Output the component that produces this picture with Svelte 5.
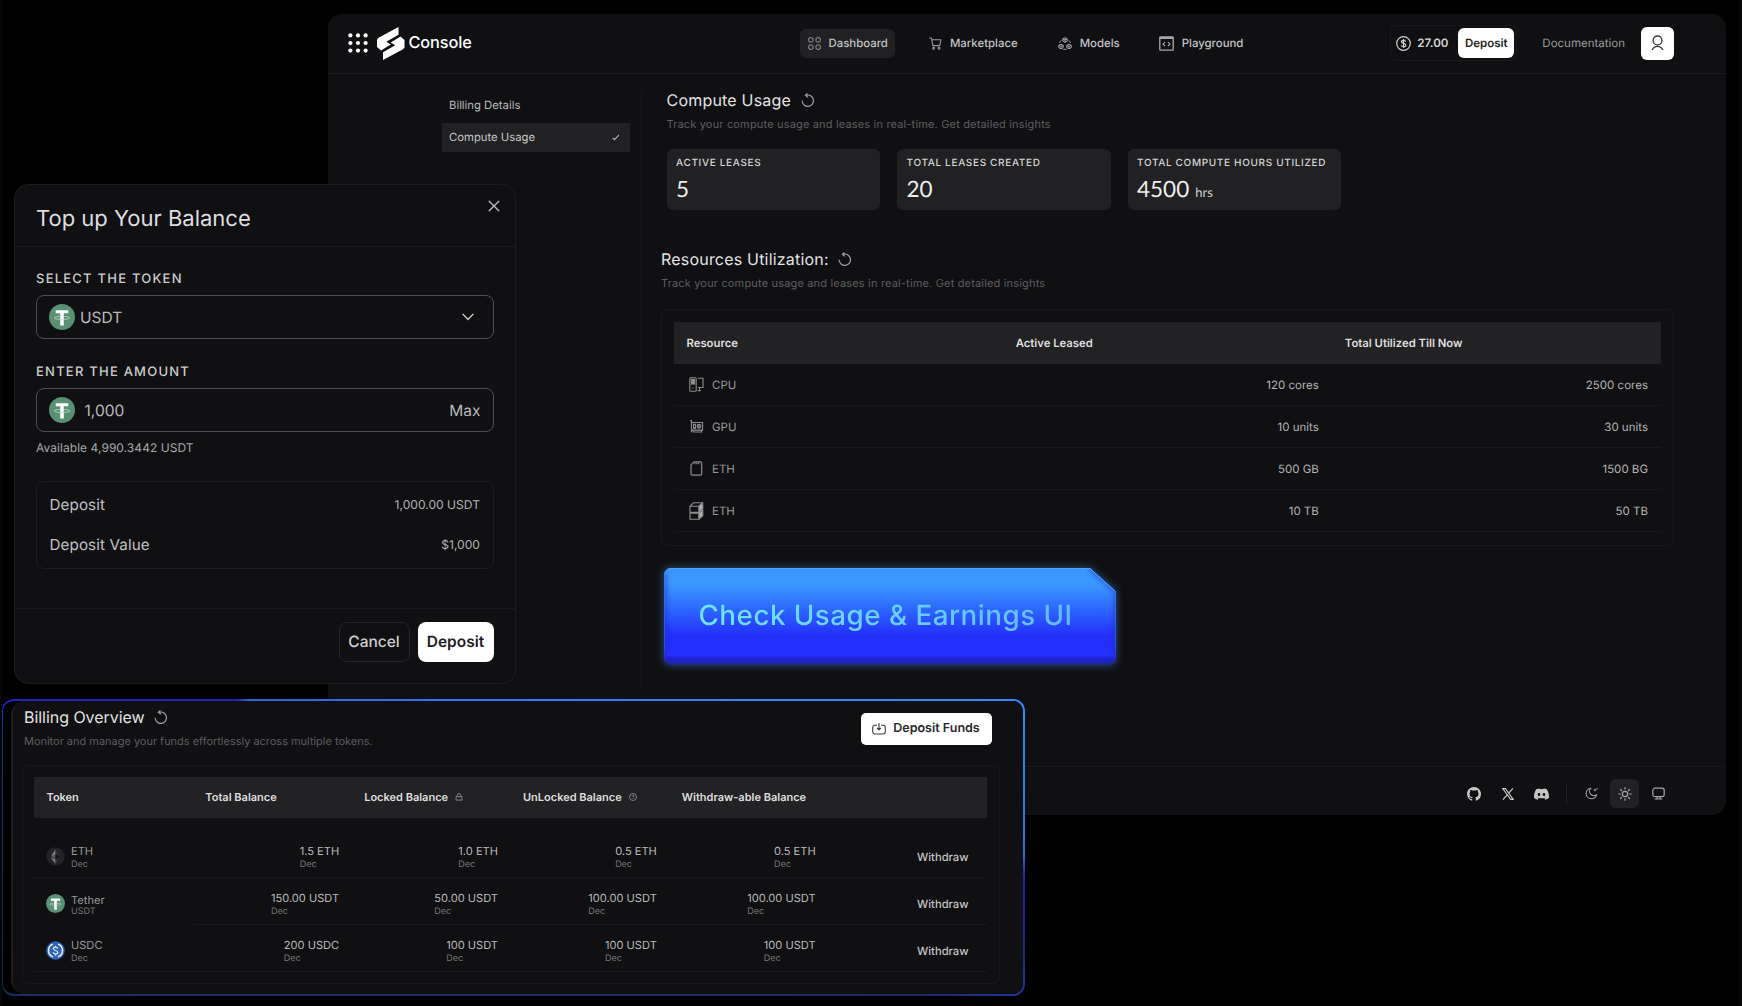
<script>
  const nav = [
    { label: 'Dashboard', icon: 'grid', active: true },
    { label: 'Marketplace', icon: 'cart' },
    { label: 'Models', icon: 'cubes' },
    { label: 'Playground', icon: 'code' }
  ];
  const stats = [
    { label: 'ACTIVE LEASES', value: '5' },
    { label: 'TOTAL LEASES CREATED', value: '20' },
    { label: 'TOTAL COMPUTE HOURS UTILIZED', value: '4500', unit: 'hrs' }
  ];
  const resources = [
    { icon: 'cpu', name: 'CPU', active: '120 cores', total: '2500 cores' },
    { icon: 'gpu', name: 'GPU', active: '10 units', total: '30 units' },
    { icon: 'card', name: 'ETH', active: '500 GB', total: '1500 BG' },
    { icon: 'rack', name: 'ETH', active: '10 TB', total: '50 TB' }
  ];
  const tokens = [
    { icon: 'eth', name: 'ETH', sub: 'Dec', values: ['1.5 ETH', '1.0 ETH', '0.5 ETH', '0.5 ETH'] },
    { icon: 'usdt', name: 'Tether', sub: 'USDT', values: ['150.00 USDT', '50.00 USDT', '100.00 USDT', '100.00 USDT'] },
    { icon: 'usdc', name: 'USDC', sub: 'Dec', values: ['200 USDC', '100 USDT', '100 USDT', '100 USDT'] }
  ];
  const dots = [2.4, 10, 17.6];
</script>

{#snippet refresh()}
  <svg class="refresh" width="14" height="15" viewBox="0 0 15 16" fill="none" stroke="#a2a2a4" stroke-width="1.25" stroke-linecap="round" stroke-linejoin="round">
    <path d="M1.2 8.6a6.1 6.1 0 1 0 5.2-6.4" />
    <path d="M6.2 2.3 4.6 2.5M6.6.8 4.7 2.5l2.300 1.700" />
  </svg>
{/snippet}

{#snippet tether(size)}
  <svg width={size} height={size} viewBox="0 0 26 26">
    <circle cx="13" cy="13" r="13" fill="#579072" />
    <path d="M6.700 6.200h12.600v3.100h-4.500v12.300h-3.600V9.300H6.700z" fill="#fff" />
    <path d="M10.800 12.500c-3 .1-5.600.6-5.600 1.400 0 .9 3.500 1.500 7.800 1.500s7.800-.6 7.800-1.500c0-.8-2.600-1.300-5.600-1.400" fill="none" stroke="#c9d9d0" stroke-width=".8" />
  </svg>
{/snippet}

{#snippet icon(name)}
  {#if name === 'grid'}
    <svg width="13" height="13" viewBox="0 0 13 13" fill="none" stroke="#98989a" stroke-width="1"><rect x=".7" y=".7" width="4.300" height="4.300" rx="1.300" /><rect x="8" y=".7" width="4.300" height="4.300" rx="1.300" /><rect x=".7" y="8" width="4.300" height="4.300" rx="1.300" /><rect x="8" y="8" width="4.300" height="4.300" rx="1.300" /></svg>
  {:else if name === 'cart'}
    <svg width="13" height="13" viewBox="0 0 13 13" fill="none" stroke="#98989a" stroke-width="1.100" stroke-linejoin="round"><path d="M.3 1h2.200l1.300 7.600h6.900l1.200-5.800H2.800" /><circle cx="4.600" cy="11.200" r=".9" /><circle cx="10" cy="11.200" r=".9" /></svg>
  {:else if name === 'cubes'}
    <svg width="14" height="13" viewBox="0 0 14 13" fill="none" stroke="#a8a8aa" stroke-width="1" stroke-linejoin="round"><path d="M7 .7 9.200 1.800v2.400L7 5.300 4.800 4.200V1.800zM4.800 1.800 7 2.900l2.200-1.100M7 2.900v2.400" /><path d="M3 7.200 5.200 8.300v2.400L3 11.800.8 10.700V8.300zM.8 8.300 3 9.400l2.200-1.100M3 9.400v2.400" /><path d="m11 7.200 2.200 1.100v2.400L11 11.800l-2.200-1.100V8.300zM8.800 8.300 11 9.400l2.200-1.100M11 9.400v2.400" /><path d="M3.300 3.300Q1.900 4.300 1.600 5.900M10.700 3.300q1.400 1 1.700 2.600M5.300 12.300h3.400" /></svg>
  {:else if name === 'code'}
    <svg width="15" height="15" viewBox="0 0 15 15" fill="none" stroke="#a8a8aa" stroke-width="1.300"><rect x=".8" y=".8" width="13.400" height="13.400" rx=".8" /><path d="M.8 2h13.400" stroke-width="2" /><path d="M6 6.200 4 8.200l2 2M9 6.200l2 2-2 2" stroke-width="1.100" /></svg>
  {:else if name === 'cpu'}
    <svg width="15" height="15" viewBox="0 0 15 15" fill="none" stroke="#8d8d8f" stroke-width="1.100"><rect x=".8" y=".8" width="6.400" height="13.400" rx=".8" /><rect x="2.400" y="2.400" width="3.200" height="4.600" fill="#8d8d8f" /><path d="M9 1.300h5v9.200H9M10.500 10.500v3.200M8.800 13.600h3M3.300 11h1.400" /></svg>
  {:else if name === 'gpu'}
    <svg width="15" height="15" viewBox="0 0 15 15" fill="none" stroke="#8d8d8f" stroke-width="1.100"><path d="M1 1.600h1.400v12M2.400 3.500h11.200v7.600H2.400M4 13h8.500v-1.500M4 11.500V13" /><rect x="4.500" y="5.300" width="2" height="4" /><circle cx="10" cy="7.300" r="1.900" fill="#66666a" /></svg>
  {:else if name === 'card'}
    <svg width="15" height="15" viewBox="0 0 15 15" fill="none" stroke="#8d8d8f" stroke-width="1.200"><path d="M5 .9h6.300c.8 0 1.400.5 1.400 1.300v10.600c0 .8-.5 1.300-1.300 1.300H3.300c-.8 0-1.300-.5-1.300-1.300V3.900z" /><path d="M5.800 1.500v1.800M7.800 1.500v1.800M9.800 1.500v1.800" /></svg>
  {:else if name === 'rack'}
    <svg width="15" height="18" viewBox="0 0 15 18" fill="none" stroke="#8d8d8f" stroke-width="1.100" stroke-linejoin="round"><path d="M1 4.200 4.500.8h9L10 4.200zM1 4.200h9v6H1zM1 11.200h9v6H1z" /><path d="M10 4.200 13.800.8v5.800L10 10zM10 11.200l3.800-3.400v6L10 17.200z" fill="#b0b0b2" /></svg>
  {:else if name === 'eth'}
    <svg width="19" height="19" viewBox="0 0 19 19"><circle cx="9.500" cy="9.500" r="9.300" fill="#232325" /><path d="M9.500 2v5.500L5 9.600zM9.500 12.200V17L5 10.800z" fill="#858588" /><path d="M9.500 2 14 9.600 9.500 7.500zM14 10.800 9.500 17v-4.800z" fill="#303033" /><path d="m5 9.600 4.500-2.100v4.600z" fill="#59595c" /><path d="m14 9.600-4.500-2.100v4.600z" fill="#121214" /></svg>
  {:else if name === 'usdc'}
    <svg width="19" height="19" viewBox="0 0 19 19" fill="none" stroke="#e6ebf3" stroke-width="1.500"><circle cx="9.500" cy="9.500" r="9.300" fill="#2f63b8" stroke="none" /><path d="M7 3.100a6.800 6.800 0 0 0 0 12.800M12 3.100a6.800 6.800 0 0 1 0 12.800" /><path d="M11.700 7.600c-.2-1.100-1-1.500-2.200-1.500-1.300 0-2.100.6-2.100 1.600 0 2.300 4.400 1.200 4.400 3.700 0 1-.9 1.600-2.300 1.600-1.300 0-2.200-.6-2.300-1.700M9.500 4.700v1.400M9.500 13v1.400" stroke-width="1.200" /></svg>
  {/if}
{/snippet}

<div class="canvas">
  <section class="console">
    <header class="topbar">
      <div class="brand">
        <svg class="apps" width="20" height="20" viewBox="0 0 20 20" fill="#fff">
          {#each dots as y}{#each dots as x}<circle cx={x} cy={y} r="2.100" />{/each}{/each}
        </svg>
        <svg class="logo" width="28" height="33" viewBox="0 0 28 33" fill="#fff">
          <path d="M0 12.500 1.500 10.800 21.500 0v7.800L9.300 14.700l4.500 2.800L4 23.600l-4-3.500z" />
          <path d="M27.500 20.500 26 22.200 6 33v-7.800l12.200-6.900-4.500-2.800L23.500 9.400l4 3.500z" />
        </svg>
        <span class="wordmark">Console</span>
      </div>
      <nav>
        {#each nav as item}
          <a class="nav-item" class:active={item.active} class:last={item.icon === 'code'}>{@render icon(item.icon)}<span>{item.label}</span></a>
        {/each}
      </nav>
      <div class="account">
        <div class="wallet">
          <svg width="15" height="15" viewBox="0 0 15 15" fill="none" stroke="#d2d2d3" stroke-width="1.200"><circle cx="7.500" cy="7.500" r="6.800" /><path d="M9.700 5.700c-.2-1-1-1.400-2.200-1.400-1.300 0-2.100.6-2.100 1.500 0 2.200 4.400 1.100 4.400 3.400 0 1-.9 1.500-2.300 1.500s-2.200-.5-2.300-1.500M7.500 3v9" /></svg>
          <span class="amount">27.00</span>
          <button class="mini-deposit">Deposit</button>
        </div>
        <span class="docs">Documentation</span>
        <div class="avatar">
          <svg width="13" height="16" viewBox="0 0 13 16" fill="none" stroke="#333335" stroke-width="1.300"><circle cx="6.500" cy="5.400" r="4.400" /><path d="M1.200 15c1.200-2.700 3-3.600 5.300-3.600s4.100.9 5.300 3.600" /></svg>
        </div>
      </div>
    </header>

    <div class="body">
      <aside>
        <div class="side-item">Billing Details</div>
        <div class="side-item selected">
          <span>Compute Usage</span>
          <svg width="8" height="7" viewBox="0 0 8 7" fill="none" stroke="#b4b4b5" stroke-width="1.100"><path d="m.7 3.800 1.800 1.900L7 .8" /></svg>
        </div>
      </aside>
      <main>
        <div class="usage">
          <h2>Compute Usage {@render refresh()}</h2>
          <p class="hint">Track your compute usage and leases in real-time. Get detailed insights</p>
          <div class="stats">
            {#each stats as s}
              <div class="stat">
                <div class="stat-label">{s.label}</div>
                <div class="stat-value">{s.value}{#if s.unit}<small>{s.unit}</small>{/if}</div>
              </div>
            {/each}
          </div>
        </div>
        <h2 class="second">Resources Utilization: {@render refresh()}</h2>
        <p class="hint">Track your compute usage and leases in real-time. Get detailed insights</p>
        <div class="res-table">
          <div class="res-row head"><span>Resource</span><span>Active Leased</span><span>Total Utilized Till Now</span></div>
          {#each resources as r}
            <div class="res-row">
              <span class="res-name"><i>{@render icon(r.icon)}</i>{r.name}</span>
              <span class="num">{r.active}</span>
              <span class="num">{r.total}</span>
            </div>
          {/each}
        </div>
        <div class="cta">
          <svg class="cta-shape" width="472" height="117" viewBox="-10 -10 472 117">
            <defs>
              <linearGradient id="ctaFill" x1="0" y1="0" x2="0" y2="1">
                <stop offset="0" stop-color="#3b94ff" /><stop offset=".16" stop-color="#3a99ff" /><stop offset=".42" stop-color="#2d68ff" /><stop offset=".7" stop-color="#2330fb" /><stop offset=".91" stop-color="#2330ff" /><stop offset=".95" stop-color="#2122c8" /><stop offset="1" stop-color="#2023a8" />
              </linearGradient>
              <linearGradient id="ctaEdge" x1="0" y1="0" x2="0" y2="1">
                <stop offset="0" stop-color="#4aa8ff" /><stop offset=".8" stop-color="#2f6fe0" /><stop offset="1" stop-color="#23259f" />
              </linearGradient>
              <filter id="glow" x="-10%" y="-30%" width="120%" height="160%"><feGaussianBlur stdDeviation="4" /></filter>
              <filter id="inner" x="-5%" y="-5%" width="110%" height="110%"><feGaussianBlur stdDeviation="2" /></filter>
              <clipPath id="ctaClip"><path d="M6 0H426L452 23V91a6 6 0 0 1-6 6H6a6 6 0 0 1-6-6V6a6 6 0 0 1 6-6z" /></clipPath>
            </defs>
            <path d="M6 0H426L452 23V91a6 6 0 0 1-6 6H6a6 6 0 0 1-6-6V6a6 6 0 0 1 6-6z" fill="#2b5c9c" opacity=".85" filter="url(#glow)" />
            <path d="M6 .5H426L451.500 23.500V90a6 6 0 0 1-6 6H6.500a6 6 0 0 1-6-6V6.500a6 6 0 0 1 5.500-6z" fill="url(#ctaFill)" stroke="url(#ctaEdge)" />
            <path d="M1 6v86M426 0l26 24v68" fill="none" stroke="#2126c4" stroke-width="4" opacity=".55" filter="url(#inner)" clip-path="url(#ctaClip)" />
            <path d="M6 .5H426L451.500 23.500" fill="none" stroke="#4aa8ff" />
          </svg>
          <span>Check Usage &amp; Earnings UI</span>
        </div>
      </main>
    </div>

    <footer class="statusbar">
      <svg class="github" width="14" height="14" viewBox="0 0 16 16" fill="#c6c6c7"><path d="M8 0C3.580 0 0 3.580 0 8c0 3.540 2.290 6.530 5.470 7.590.4.070.55-.17.550-.380v-1.490c-2.230.490-2.690-.950-2.690-.950-.360-.920-.890-1.170-.890-1.170-.730-.5.060-.490.060-.490.800.060 1.230.830 1.230.830.720 1.220 1.870.870 2.330.660.070-.520.280-.870.510-1.070-1.780-.2-3.640-.890-3.640-3.950 0-.870.310-1.590.820-2.150-.080-.2-.360-1.020.080-2.120 0 0 .670-.210 2.200.820a7.600 7.600 0 0 1 4 0c1.530-1.040 2.200-.820 2.200-.820.440 1.100.160 1.920.080 2.120.510.560.820 1.270.820 2.150 0 3.070-1.870 3.750-3.650 3.950.290.250.540.730.540 1.480v2.200c0 .210.150.460.550.380A8 8 0 0 0 16 8c0-4.420-3.580-8-8-8z" /></svg>
      <svg class="xmark" width="12" height="12" viewBox="0 0 12 12"><path d="M.8.600h2.600l7.800 10.800H8.600z" fill="none" stroke="#c6c6c7" stroke-width="1.100" /><path d="M10.900.4 6.700 5.200M5.200 6.900.9 11.600" stroke="#c6c6c7" stroke-width="1.200" /></svg>
      <svg class="discord" width="15" height="12" viewBox="0 0 16 12" fill="#c6c6c7"><path fill-rule="evenodd" d="M13.550 1A13.200 13.200 0 0 0 10.300 0l-.420.840a12.200 12.200 0 0 0-3.700 0L5.750 0A13.300 13.300 0 0 0 2.450 1C.360 4.100-.2 7.150.08 10.150A13.300 13.300 0 0 0 4.100 12l.86-1.400-1.370-.65.340-.27a9.500 9.500 0 0 0 8.140 0l.340.27-1.370.65.860 1.400a13.200 13.200 0 0 0 4.020-1.850c.330-3.480-.560-6.500-2.370-9.150zM5.350 8.100c-.8 0-1.460-.73-1.460-1.620s.640-1.620 1.460-1.620 1.470.73 1.460 1.620c0 .89-.65 1.620-1.460 1.620zm5.300 0c-.8 0-1.460-.73-1.460-1.620s.640-1.620 1.460-1.620 1.470.73 1.460 1.620c0 .89-.64 1.620-1.460 1.620z" /></svg>
      <span class="divider"></span>
      <svg class="moon" width="13" height="13" viewBox="0 0 13 13" fill="none" stroke="#a5a5a7" stroke-width="1.100" stroke-linejoin="round"><path d="M6 1.200A5.300 5.300 0 1 0 11.600 7.600 4 4 0 0 1 6 1.200z" /><path d="m10 1.200.6 1.200 1.200.6-1.200.6-.6 1.200-.6-1.200-1.200-.6 1.200-.6z" fill="#a5a5a7" stroke="none" /><circle cx="12.100" cy="1.700" r=".7" fill="#a5a5a7" stroke="none" /></svg>
      <span class="theme"><svg width="14" height="14" viewBox="0 0 14 14" fill="none" stroke="#a5a5a7" stroke-width="1.200" stroke-linecap="round"><circle cx="7" cy="7" r="2.700" /><path d="M7 .7v1.400M7 11.900v1.400M.7 7h1.400M11.900 7h1.400M2.500 2.500l1 1M10.500 10.500l1 1M11.500 2.500l-1 1M3.500 10.500l-1 1" /></svg></span>
      <svg class="monitor" width="13" height="13" viewBox="0 0 13 13" fill="none" stroke="#a5a5a7" stroke-width="1.200"><rect x=".8" y="1.200" width="11.400" height="8.500" rx="2.200" /><path d="M2.700 12h7.600M5 9.800v2M8 9.800v2" /></svg>
    </footer>
  </section>

  <section class="modal">
    <div class="modal-head">
      <h1>Top up Your Balance</h1>
      <svg width="12" height="12" viewBox="0 0 12 12" fill="none" stroke="#c2c2c3" stroke-width="1.300" stroke-linecap="round"><path d="m1.200 1.200 9.600 9.600M10.800 1.200 1.200 10.800" /></svg>
    </div>
    <div class="modal-body">
      <div class="field-label">SELECT THE TOKEN</div>
      <div class="field">
        {@render tether(26)}
        <span class="field-text">USDT</span>
        <svg class="chevron" width="12" height="8" viewBox="0 0 12 8" fill="none" stroke="#c2c2c3" stroke-width="1.400" stroke-linecap="round" stroke-linejoin="round"><path d="m1 1.200 5 5.300 5-5.300" /></svg>
      </div>
      <div class="field-label gap">ENTER THE AMOUNT</div>
      <div class="field">
        {@render tether(26)}
        <span class="field-text amount-text">1,000</span>
        <span class="max">Max</span>
      </div>
      <div class="available">Available 4,990.3442 USDT</div>
      <div class="summary">
        <div><span>Deposit</span><b>1,000.00 USDT</b></div>
        <div><span>Deposit Value</span><b>$1,000</b></div>
      </div>
    </div>
    <div class="modal-foot">
      <button class="cancel">Cancel</button>
      <button class="confirm">Deposit</button>
    </div>
  </section>

  <section class="billing">
    <div class="billing-inner">
      <div class="billing-head">
        <div>
          <h2 class="overview">Billing Overview {@render refresh()}</h2>
          <p class="hint funds">Monitor and manage your funds effortlessly across multiple tokens.</p>
        </div>
        <button class="funds-btn">
          <svg width="14" height="12" viewBox="0 0 14 12" fill="none" stroke="#3a3a3c" stroke-width="1.100" stroke-linecap="round" stroke-linejoin="round"><path d="M4.500 2.200H3A2.300 2.300 0 0 0 .7 4.500v4A2.500 2.500 0 0 0 3.200 11h7.600a2.500 2.500 0 0 0 2.500-2.500v-4A2.300 2.300 0 0 0 11 2.200H9.500M7 .6v6M5.300 5.200 7 6.900l1.700-1.700" /></svg>
          Deposit Funds
        </button>
      </div>
      <div class="tok-table">
        <div class="tok-head">
          <span>Token</span>
          <span>Total Balance</span>
          <span>Locked Balance <svg width="8" height="8" viewBox="0 0 8 8" fill="none" stroke="#98989a" stroke-width=".8"><path d="M1 3.600h6v3.500H1zM2.300 3.500V2.300a1.700 1.700 0 0 1 3.400 0v1.200" /></svg></span>
          <span>UnLocked Balance <svg width="8" height="8" viewBox="0 0 8 8" fill="none" stroke="#98989a" stroke-width=".8"><circle cx="4" cy="4" r="3.500" /><path d="M3 3.300C3 2 5 2 5 3.200c0 .8-1 .7-1 1.500M4 5.500v.6" /></svg></span>
          <span>Withdraw-able Balance</span>
        </div>
        {#each tokens as t, i}
          <div class="tok-row" class:partial={i === 1}>
            <div class="tok-name" class:tight={i === 1}>
              {#if t.icon === 'usdt'}{@render tether(19)}{:else}{@render icon(t.icon)}{/if}
              <div><div class="val">{t.name}</div><div class="sub">{t.sub}</div></div>
            </div>
            {#each t.values as v}
              <div class="tok-val"><div><div class="val">{v}</div><div class="sub">Dec</div></div></div>
            {/each}
            <div class="withdraw">Withdraw</div>
          </div>
        {/each}
      </div>
    </div>
  </section>
</div>

<style>
  :global(body) { margin: 0; background: #000; }
  .canvas { position: relative; width: 1742px; height: 1006px; box-sizing: border-box; overflow: hidden; background: #000; border-left: 2px solid #060606; border-right: 3px solid #070707; font-family: Inter, "Liberation Sans", sans-serif; font-optical-sizing: none; text-rendering: geometricPrecision; color: #d6d6d7; }
  .canvas * { box-sizing: border-box; }
  svg { display: block; flex: none; }
  h1, h2, p { margin: 0; font-weight: 400; }
  button { font-family: inherit; padding: 0; border: 0; white-space: nowrap; text-rendering: inherit; }

  .console { position: absolute; left: 326px; top: 14px; width: 1398px; height: 801px; background: #101012; border-radius: 14px; display: flex; flex-direction: column; }
  .topbar { height: 60px; flex: none; border-bottom: 1px solid #1d1d1f; display: flex; align-items: center; padding-bottom: 1px; }
  .brand { display: flex; align-items: center; width: 471.500px; padding-left: 20px; }
  .apps { margin-right: 9px; }
  .logo { margin-right: 3.500px; }
  .wordmark { font-size: 16.300px; font-weight: 500; letter-spacing: -.1px; line-height: 20px; padding-bottom: 2px; color: #fff; }
  nav { display: flex; gap: 25px; flex: 1; }
  .nav-item { display: flex; align-items: center; gap: 8px; height: 29px; padding: 0 7px 0 8px; border-radius: 6px; font-size: 11.400px; font-weight: 500; color: #c4c4c6; }
  .nav-item.active { background: #212123; margin-right: 1px; }
  .nav-item.last { margin-left: -1px; }
  .account { display: flex; align-items: center; padding-right: 52px; }
  .wallet { width: 127px; height: 36px; border: 1px solid #1a1a1c; border-radius: 6px; display: flex; align-items: center; padding: 0 2px 0 5px; }
  .amount { font-size: 11.600px; font-weight: 600; margin-left: 6px; }
  .mini-deposit { margin-left: auto; width: 56px; height: 30px; border-radius: 6px; background: #fff; color: #1c1c1e; font-size: 11.500px; font-weight: 600; }
  .docs { margin: 0 16px 0 25px; font-size: 11.500px; color: #9b9b9d; }
  .avatar { width: 33px; height: 33px; border-radius: 6px; background: #fff; display: grid; place-items: center; }

  .body { display: flex; flex: 1; min-height: 0; }
  aside { width: 314px; height: 600px; margin-top: 16px; border-right: 1px solid #19191b; padding: 0 11px 0 114px; }
  .side-item { height: 30px; display: flex; align-items: center; justify-content: space-between; padding: 0 10px 0 7px; font-size: 11.300px; color: #b9b9bb; }
  .side-item.selected { height: 29px; margin-top: 3px; background: #212123; color: #c4c4c6; padding-bottom: 1px; }
  main { flex: 1; padding: 16px 0 0 19px; }
  .usage { padding-left: 5.500px; }
  h2 { display: flex; align-items: center; gap: 9.500px; height: 20px; font-size: 16px; letter-spacing: .2px; color: #e3e3e4; white-space: nowrap; }
  h2.overview { letter-spacing: -.04px; }
  .hint { font-size: 11px; line-height: 15px; margin-top: 7px; color: #5e5e60; letter-spacing: .17px; white-space: nowrap; }
  .stats { display: flex; gap: 17px; margin-top: 17px; }
  .stat { width: 213.500px; height: 61px; border-radius: 6px; background: #212123; padding: 7px 9.500px; }
  .stat-label { font-size: 10px; line-height: 14px; font-weight: 500; letter-spacing: .66px; white-space: nowrap; color: #d5d5d6; }
  .stat-value { font-family: Lato, sans-serif; font-size: 22.500px; line-height: 28px; margin-top: 5px; color: #eee; }
  small { font-size: 13px; margin-left: 6px; color: #d0d0d1; }
  .second { margin-top: 39px; }
  .res-table { margin-top: 18px; width: 1013px; height: 237px; border: 1px solid #19191b; border-radius: 7px; padding: 12px 12px 12px 11.500px; }
  .res-row { display: grid; grid-template-columns: repeat(3, 1fr); height: 42px; border-bottom: 1px solid #19191b; align-items: center; padding: 0; font-size: 11.500px; color: #b4b4b6; }
  .res-row > span { padding: 0 13px; }
  .res-row.head { background: #222224; border: 0; font-size: 11.300px; font-weight: 600; color: #dedede; }
  .num { text-align: right; }
  .res-name { display: flex; align-items: center; color: #98989a; }
  .res-name i { width: 25.500px; padding-left: 2px; }

  .cta { position: relative; width: 452px; height: 97px; margin-top: 22px; margin-left: 3px; display: flex; align-items: center; padding: 0 0 4px 34.500px; }
  .cta-shape { position: absolute; left: -10px; top: -10px; }
  .cta span { position: relative; font-size: 27.800px; font-weight: 450; letter-spacing: .48px; white-space: nowrap; background: linear-gradient(100deg, #71e4ff, #62bcff); -webkit-background-clip: text; background-clip: text; color: transparent; }

  .statusbar { height: 49px; flex: none; border-top: 1px solid #19191b; display: flex; align-items: center; justify-content: flex-end; padding: 5px 61px 0 0; }
  .xmark { margin-left: 21px; }
  .discord { margin-left: 20px; }
  .divider { width: 1px; height: 20px; background: #222224; margin: 0 18px 0 17px; }
  .theme { width: 29px; height: 29px; border-radius: 6px; background: #212123; display: grid; place-items: center; margin: 0 13px 0 12px; }

  .modal { position: absolute; left: 12px; top: 184px; width: 502px; height: 500px; border: 1px solid #1d1d1f; border-radius: 14px; background: #101012; display: flex; flex-direction: column; }
  .modal-head { height: 62px; flex: none; border-bottom: 1.500px solid #1c1c1e; display: flex; justify-content: space-between; padding: 15px 15px 0 21px; }
  h1 { font-size: 22px; line-height: 38px; color: #dfdfe0; }
  .modal-body { flex: 1; padding: 23px 21.500px 0 21px; }
  .field-label { font-size: 13px; line-height: 18px; height: 18px; font-weight: 500; letter-spacing: 1.230px; color: #cbcbcc; }
  .field-label.gap { margin-top: 24px; }
  .field { height: 44px; margin-top: 7px; border: 1.500px solid #4d4d4f; border-radius: 8px; display: flex; align-items: center; padding: 0 12px; color: #b9b9bb; font-size: 15.500px; }
  .field-text { margin-left: 5px; }
  .amount-text { margin-left: 9.500px; }
  .chevron { margin-left: auto; margin-right: 7px; }
  .max { margin-left: auto; }
  .available { margin-top: 7px; font-size: 12px; line-height: 18px; color: #a6a6a8; letter-spacing: .05px; }
  .summary { margin-top: 24px; height: 88px; border: 1px solid #1e1e20; border-radius: 8px; padding: 2.500px 12.500px; }
  .summary > div { height: 40px; display: flex; align-items: center; justify-content: space-between; font-size: 15.200px; color: #c0c0c2; letter-spacing: .1px; }
  b { font-size: 12.100px; font-weight: 400; color: #b0b0b2; letter-spacing: 0; }
  .modal-foot { height: 75px; flex: none; border-top: 1px solid #1b1b1d; display: flex; justify-content: flex-end; gap: 8px; padding: 13px 21.500px 0 0; }
  .modal-foot button { height: 40px; border-radius: 8px; font-size: 15.500px; padding-bottom: 1px; }
  .cancel { width: 71px; border: 1px solid #252527; background: #101012; color: #cfcfd0; font-weight: 500; }
  .confirm { width: 76px; background: #fff; color: #202022; font-weight: 600; }

  .billing { position: absolute; left: 0; top: 699px; width: 1023px; height: 297px; border-radius: 12px; border: 2px solid transparent; border-width: 2px 2px 2px 1px; background:
      linear-gradient(#000, #000) padding-box,
      linear-gradient(90deg, #2020bd 0, #2020bd 23%, #2c62d6 24%, #2f78ff 45%, #358aff 100%) top / 100% 5px no-repeat border-box,
      linear-gradient(90deg, #17305f, #182c62 90%, #2036a0) bottom / 100% 5px no-repeat border-box,
      linear-gradient(#2323e0 0, #1b3580 12%, #15294e 100%) left / 12px 100% no-repeat border-box,
      linear-gradient(#358aff 0, #2f6de0 52%, #2020b4 60%, #2020a8 75%, #1b2f66 85%, #2036a0 100%) right / 12px 100% no-repeat border-box; }
  .billing-inner { height: 293px; margin-left: 8px; border-left: 2px solid #1d1d1f; border-radius: 14px 10px 10px 14px; background: #101012; padding: 6px 0 0 11px; }
  .billing-head { display: flex; justify-content: space-between; height: 58px; padding-right: 31.500px; }
  .hint.funds { margin-top: 7px; letter-spacing: -.02px; }
  .funds-btn { width: 131px; height: 32px; margin-top: 5.500px; border-radius: 5px; background: #fff; color: #2a2a2c; font-size: 12.500px; font-weight: 600; display: flex; align-items: center; justify-content: center; gap: 7px; }
  .tok-table { width: 978px; height: 219px; margin-left: -2px; border: 1px solid #19191b; border-radius: 7px; padding: 11px 12px 12px 11px; }
  .tok-head, .tok-row { display: grid; grid-template-columns: repeat(6, 1fr); align-items: center; }
  .tok-head { height: 41px; background: #222224; font-size: 11px; font-weight: 600; color: #dedede; margin-bottom: 13px; padding-bottom: 1px; }
  .tok-head span { padding-left: 12.500px; display: flex; align-items: center; gap: 7px; white-space: nowrap; }
  .tok-row { height: 47px; border-bottom: 1px solid #1a1a1c; padding-top: 5px; }
  .tok-row.partial { border-image: linear-gradient(90deg, transparent 16.900%, #1a1a1c 16.900%) 1; }
  .tok-name { display: flex; align-items: center; gap: 6px; padding-left: 12px; color: #98989a; }
  .tok-name > div, .tok-val > div { height: 30px; padding-top: 1px; }
  .tok-name.tight > div { padding-top: 3px; }
  .tok-name.tight .sub { margin-top: -2px; }
  .val { font-size: 11.100px; line-height: 16px; }
  .sub { font-size: 9px; line-height: 12px; color: #77777a; }
  .tok-val { display: flex; justify-content: flex-end; padding-right: 12.500px; color: #b9b9bb; }
  .withdraw { text-align: right; padding-right: 18.500px; font-size: 11.200px; font-weight: 500; color: #c4c4c6; }
</style>
